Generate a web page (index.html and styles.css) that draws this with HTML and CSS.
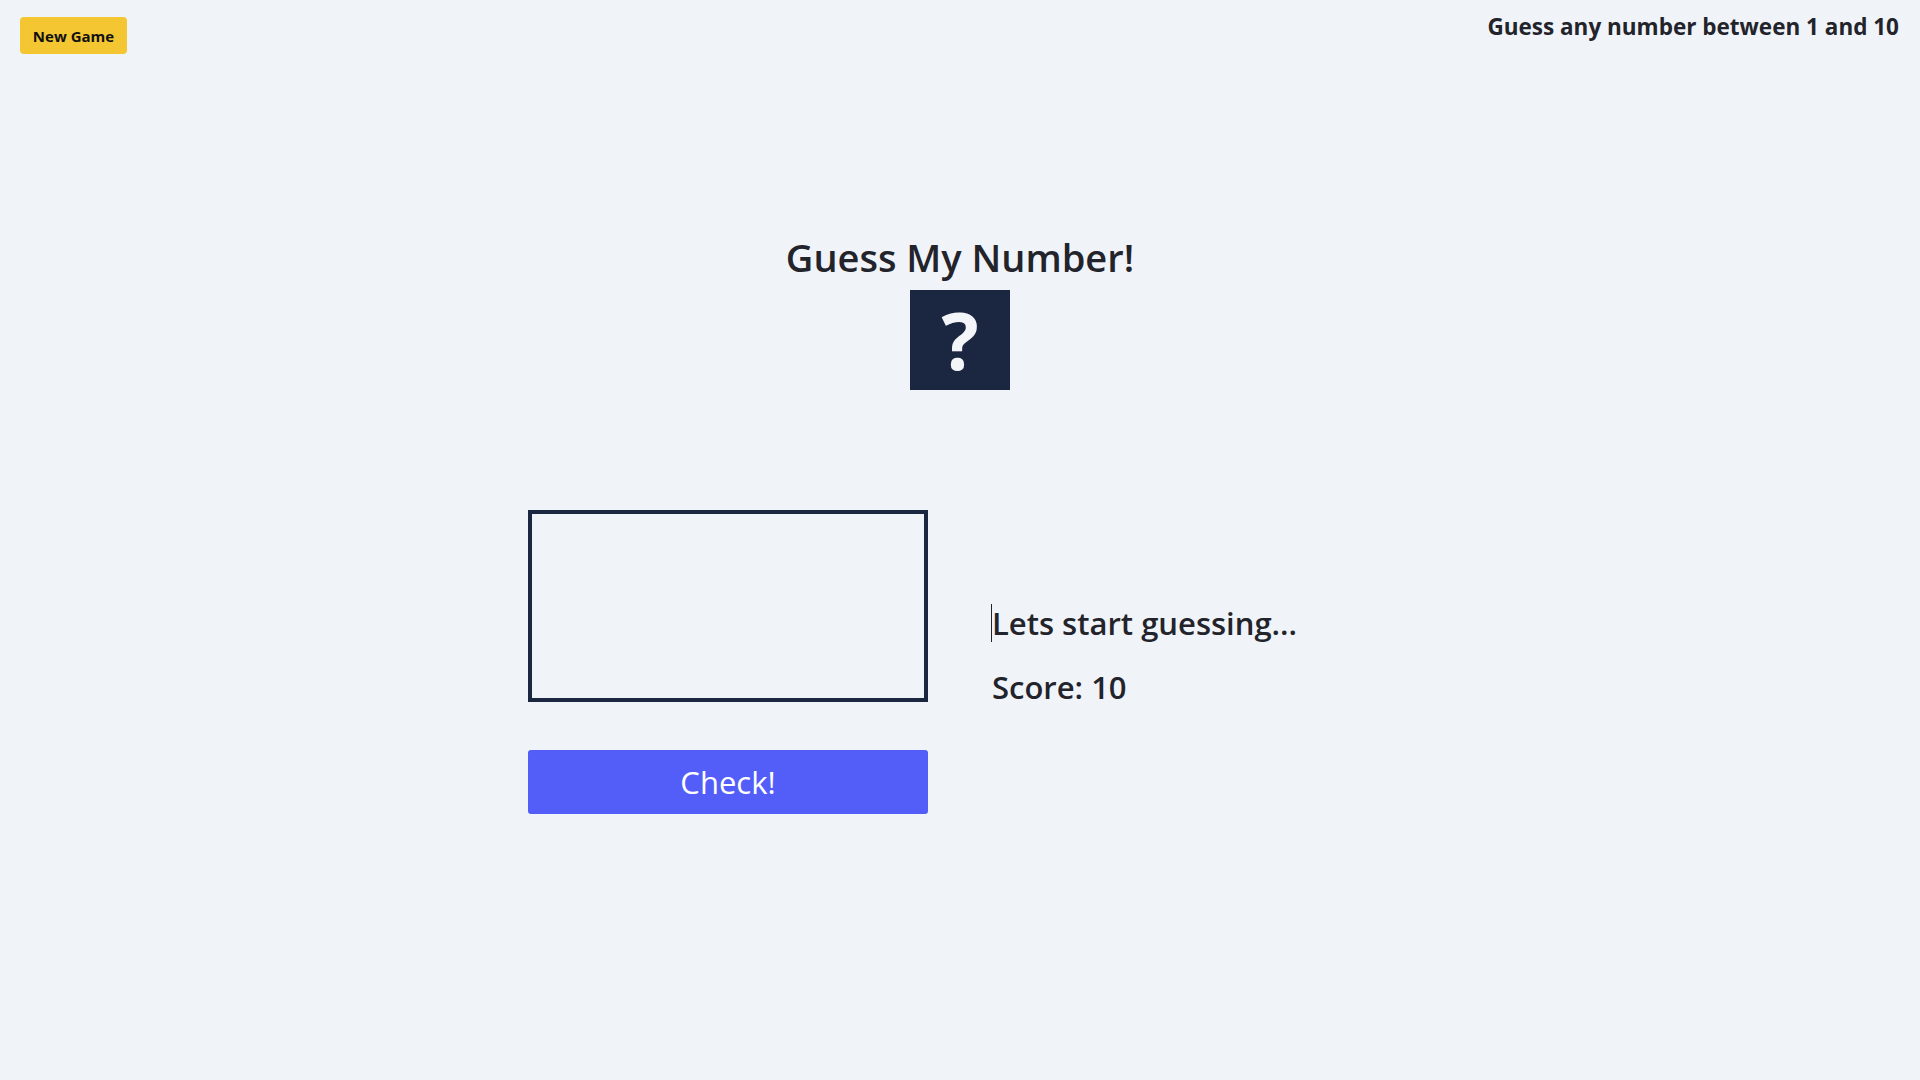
FILE: index.html
```html
<!DOCTYPE html>
<html lang="en">
<head>
<meta charset="utf-8">
<title>Guess My Number!</title>
<link rel="stylesheet" href="styles.css">
</head>
<body>
<header class="topbar">
  <button class="btn-new">New Game</button>
  <p class="hint">Guess any number between 1 and 10</p>
</header>
<main class="game">
  <section class="intro">
    <h1 class="title">Guess My Number!</h1>
    <div class="secret">?</div>
  </section>
  <section class="play">
    <div class="left">
      <input class="guess" type="number" aria-label="guess">
      <button class="btn-check">Check!</button>
    </div>
    <div class="right">
      <p class="message"><span class="caret"></span>Lets start guessing...</p>
      <p class="score">Score: 10</p>
    </div>
  </section>
</main>
</body>
</html>
```
FILE: styles.css
```css
* { box-sizing: border-box; }
html, body { margin: 0; padding: 0; }
body {
  background: #f0f4f8;
  color: #23232b;
  font-family: "Open Sans", "Noto Sans", sans-serif;
  width: 1920px;
  height: 1080px;
  overflow: hidden;
}
.topbar {
  display: flex;
  justify-content: space-between;
  align-items: flex-start;
  padding: 17px 21px 0 20px;
}
.btn-new {
  background: #f4c631;
  border: none;
  border-radius: 4px;
  font-family: inherit;
  font-weight: 700;
  font-size: 15px;
  color: #111;
  width: 107px;
  height: 37px;
  padding: 0;
}
.hint {
  margin: 0;
  font-size: 22.5px;
  font-weight: 700;
  line-height: 30px;
  margin-top: -5px;
}
.intro {
  display: flex;
  flex-direction: column;
  align-items: center;
  margin-top: 176px;
}
.title {
  margin: 0 0 6px;
  font-size: 38px;
  font-weight: 600;
  line-height: 54px;
}
.secret {
  width: 100px;
  height: 100px;
  background: #1b2641;
  color: #f3f5f8;
  font-size: 78px;
  font-weight: 700;
  line-height: 100px;
  text-align: center;
}
.play {
  display: grid;
  grid-template-columns: 400px 400px;
  column-gap: 64px;
  justify-content: center;
  margin-top: 120px;
}
.left {
  display: flex;
  flex-direction: column;
  gap: 48px;
}
.guess {
  width: 400px;
  height: 192px;
  border: 4px solid #1b2641;
  background: transparent;
  outline: none;
  font-size: 80px;
  text-align: center;
}
.btn-check {
  height: 64px;
  border: none;
  border-radius: 3px;
  background: #535ef9;
  color: #fff;
  font-family: inherit;
  font-size: 31px;
  cursor: pointer;
}
.right {
  padding-top: 93px;
}
.message, .score {
  margin: 0;
  font-size: 31px;
  font-weight: 600;
  line-height: 40px;
}
.message {
  position: relative;
}
.caret {
  position: absolute;
  left: -1px;
  top: 1px;
  width: 1px;
  height: 38px;
  background: #23232b;
}
.score {
  margin-top: 24px;
}
```
